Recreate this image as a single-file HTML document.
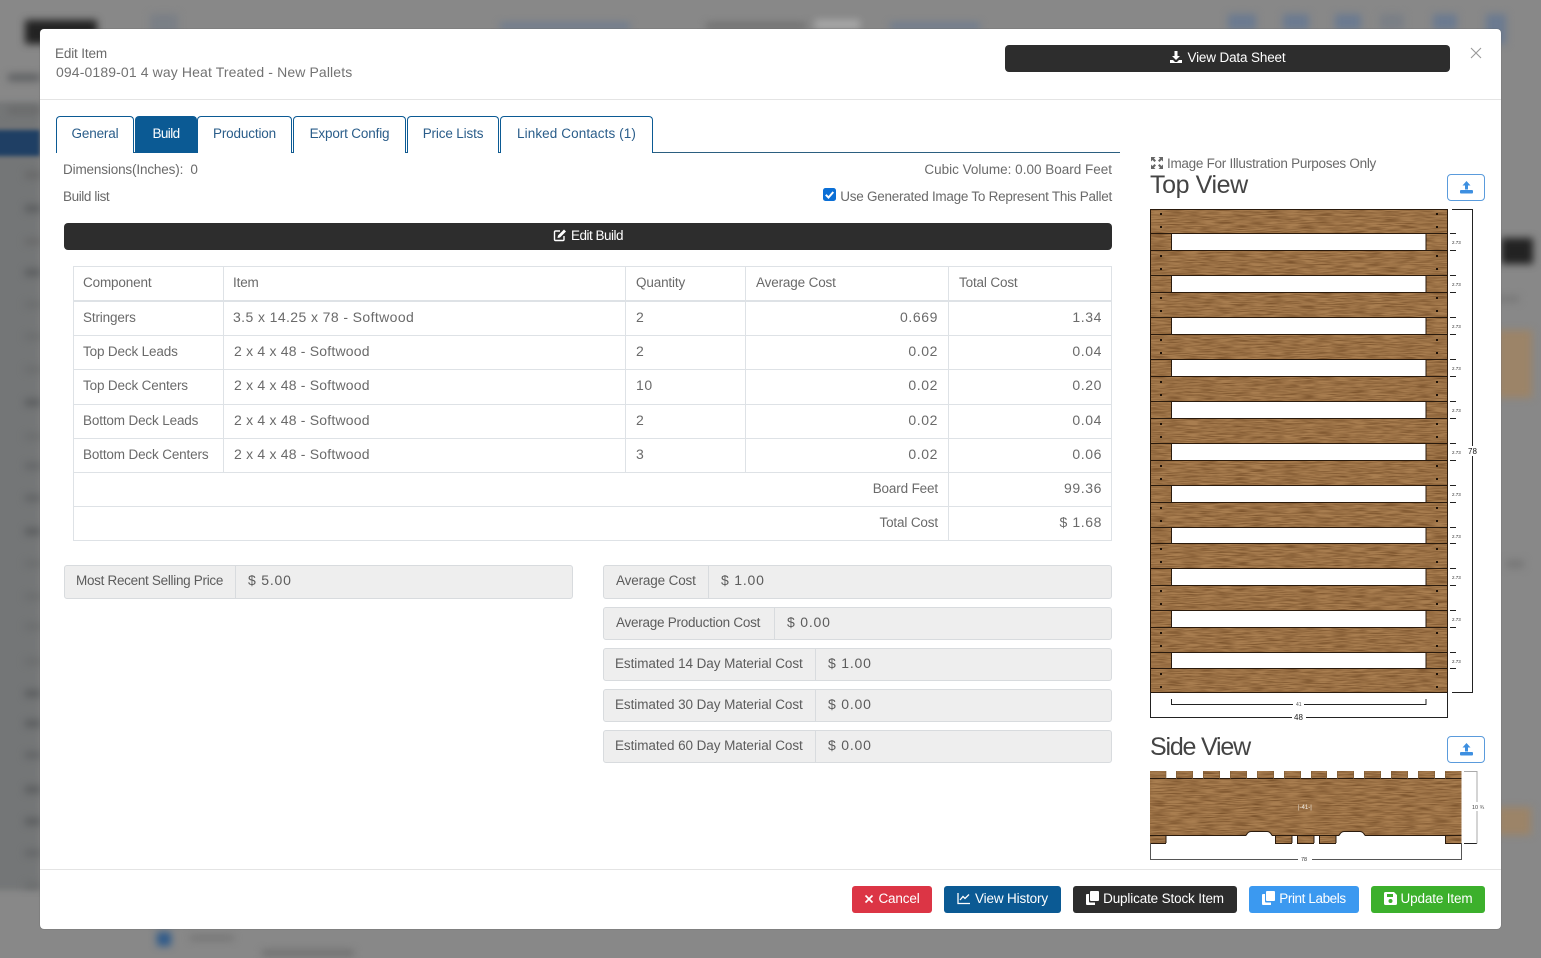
<!DOCTYPE html>
<html><head><meta charset="utf-8"><style>
html,body{margin:0;padding:0}
body{width:1541px;height:958px;position:relative;overflow:hidden;background:#888;font-family:"Liberation Sans",sans-serif;font-size:13.5px;letter-spacing:-.15px;color:#6a6a6a}
svg{letter-spacing:0}
.b{position:absolute;filter:blur(4px)}
#m{position:absolute;left:40px;top:29px;width:1461px;height:900px;background:#fff;border-radius:4px;box-shadow:0 0 1px #555}
.a{position:absolute;box-sizing:border-box}
.t{position:absolute;white-space:nowrap;line-height:22px;height:20px}
.r{text-align:right}
.t.n,.t.s{line-height:20px}
.n{font-size:14px;letter-spacing:.6px}
.s{font-size:14px;letter-spacing:.2px}
.tab{position:absolute;box-sizing:border-box;top:116px;height:37px;border:1px solid #0b5a94;border-bottom:0;border-radius:4px 4px 0 0;color:#2a5d8a;text-align:center;line-height:34px;background:#fff}
.btn{position:absolute;box-sizing:border-box;top:886px;height:27px;border-radius:3px;color:#fff;line-height:25px;text-align:center;white-space:nowrap}
.btn svg,.dk svg{vertical-align:-2px;margin-right:4px}
.dk{position:absolute;background:#2d2d2d;border-radius:4px;color:#fff;text-align:center;line-height:25px;height:27px}
.ig{position:absolute;box-sizing:border-box;background:#eee;border:1px solid #d8dbde;border-radius:3px;color:#5c5c5c}
.ig i{position:absolute;top:0;bottom:0;width:1px;background:#d8dbde}
.ig span{position:absolute;top:0;line-height:30px;white-space:nowrap;font-style:normal}
.ig span.n{letter-spacing:.8px;line-height:28px}
.h{position:absolute;background:#dee2e6;height:1px}
.v{position:absolute;background:#dee2e6;width:1px;top:266px}
.up{position:absolute;box-sizing:border-box;left:1447px;width:38px;height:27px;border:1px solid #5a9bdc;border-radius:4px;background:#fff}
.vw{position:absolute;font-size:25px;line-height:30px;color:#444;white-space:nowrap}
</style></head><body>
<div class="a" style="left:-10px;top:102px;width:50px;height:788px;background:#747677;filter:blur(3px)"></div>
<div class="b" style="left:25px;top:20px;width:72px;height:24px;background:#222"></div>
<div class="b" style="left:150px;top:14px;width:28px;height:20px;background:#7a7f86"></div>
<div class="b" style="left:500px;top:23px;width:130px;height:6px;background:#6b7a90"></div>
<div class="b" style="left:706px;top:23px;width:100px;height:6px;background:#6d6d6d"></div>
<div class="b" style="left:815px;top:20px;width:45px;height:9px;background:#aaa"></div>
<div class="b" style="left:890px;top:23px;width:90px;height:6px;background:#6b7a90"></div>
<div class="b" style="left:1228px;top:14px;width:28px;height:16px;background:#6b7a90"></div>
<div class="b" style="left:1283px;top:14px;width:26px;height:16px;background:#6b7a90"></div>
<div class="b" style="left:1335px;top:14px;width:26px;height:16px;background:#6b7a90"></div>
<div class="b" style="left:1380px;top:14px;width:24px;height:16px;background:#7a7f86"></div>
<div class="b" style="left:1433px;top:14px;width:24px;height:16px;background:#6b7a90"></div>
<div class="b" style="left:1486px;top:14px;width:20px;height:30px;background:#6b7a90"></div>
<div class="a" style="left:-6px;top:130px;width:46px;height:26px;background:#1f3f64;filter:blur(2px)"></div>
<div class="b" style="left:8px;top:74px;width:32px;height:7px;background:#5c5e60"></div>
<div class="b" style="left:8px;top:108px;width:32px;height:5px;background:#666"></div>
<div class="b" style="left:25px;top:172px;width:15px;height:6px;background:#666"></div>
<div class="b" style="left:25px;top:205px;width:15px;height:7px;background:#5a5c5e"></div>
<div class="b" style="left:25px;top:239px;width:15px;height:5px;background:#666"></div>
<div class="b" style="left:25px;top:269px;width:15px;height:7px;background:#5a5c5e"></div>
<div class="b" style="left:25px;top:302px;width:15px;height:5px;background:#696b6c"></div>
<div class="b" style="left:25px;top:334px;width:15px;height:5px;background:#696b6c"></div>
<div class="b" style="left:25px;top:367px;width:15px;height:5px;background:#696b6c"></div>
<div class="b" style="left:25px;top:399px;width:15px;height:7px;background:#5a5c5e"></div>
<div class="b" style="left:25px;top:434px;width:15px;height:5px;background:#696b6c"></div>
<div class="b" style="left:25px;top:463px;width:15px;height:6px;background:#626466"></div>
<div class="b" style="left:25px;top:495px;width:15px;height:6px;background:#5f6163"></div>
<div class="b" style="left:25px;top:528px;width:15px;height:7px;background:#5a5c5e"></div>
<div class="b" style="left:25px;top:561px;width:15px;height:5px;background:#696b6c"></div>
<div class="b" style="left:25px;top:594px;width:15px;height:5px;background:#696b6c"></div>
<div class="b" style="left:25px;top:624px;width:15px;height:5px;background:#696b6c"></div>
<div class="b" style="left:25px;top:659px;width:15px;height:5px;background:#696b6c"></div>
<div class="b" style="left:25px;top:690px;width:15px;height:7px;background:#5a5c5e"></div>
<div class="b" style="left:25px;top:720px;width:15px;height:7px;background:#5a5c5e"></div>
<div class="b" style="left:25px;top:752px;width:15px;height:6px;background:#5f6163"></div>
<div class="b" style="left:25px;top:786px;width:15px;height:7px;background:#5a5c5e"></div>
<div class="b" style="left:25px;top:818px;width:15px;height:7px;background:#5a5c5e"></div>
<div class="b" style="left:25px;top:850px;width:15px;height:6px;background:#626466"></div>
<div class="b" style="left:25px;top:883px;width:15px;height:5px;background:#696b6c"></div>
<div class="b" style="left:1501px;top:238px;width:32px;height:26px;background:#222"></div>
<div class="b" style="left:1497px;top:296px;width:22px;height:6px;background:#777"></div>
<div class="b" style="left:1497px;top:330px;width:35px;height:68px;background:#9c8468"></div>
<div class="b" style="left:1506px;top:560px;width:18px;height:8px;background:#777"></div>
<div class="b" style="left:1497px;top:807px;width:34px;height:28px;background:#9c8468"></div>
<div class="b" style="left:157px;top:932px;width:14px;height:14px;background:#2e5a8a"></div>
<div class="b" style="left:190px;top:936px;width:44px;height:4px;background:#6e6e6e"></div>
<div class="b" style="left:262px;top:950px;width:92px;height:6px;background:#6e6e6e"></div>
<div id="m"></div>

<div class="t" style="left:55px;top:43px">Edit Item</div>
<div class="t s" style="left:56px;top:62px;letter-spacing:.12px;color:#727272">094-0189-01 4 way Heat Treated - New Pallets</div>
<div class="dk" style="left:1005px;top:45px;width:445px"><svg width="14" height="14" viewBox="0 0 14 14"><path d="M5.500 1h3v5h2.500L7 10 3 6h2.500zM1 10h3l2 2h2l2-2h3v3H1z" fill="#fff"/></svg>View Data Sheet</div>
<svg class="a" style="left:1470px;top:47px" width="12" height="12" viewBox="0 0 12 12"><path d="M1 1l10 10M11 1L1 11" stroke="#999" stroke-width="1.100"/></svg>
<div class="a" style="left:40px;top:99px;width:1461px;height:1px;background:#e4e4e4"></div>

<div class="a" style="left:56px;top:152px;width:1064px;height:1px;background:#2b5f80"></div>
<div class="tab" style="left:56px;width:78px">General</div>
<div class="tab" style="left:135px;width:62px;background:#0b5a94;color:#fff;letter-spacing:-.6px">Build</div>
<div class="tab" style="left:197px;width:95px">Production</div>
<div class="tab" style="left:293px;width:113px">Export Config</div>
<div class="tab" style="left:407px;width:92px">Price Lists</div>
<div class="tab" style="left:500px;width:153px;letter-spacing:.1px">Linked Contacts (1)</div>

<div class="t" style="left:63px;top:159px">Dimensions(Inches): &nbsp;0</div>
<div class="t" style="left:63px;top:186px;letter-spacing:-.4px">Build list</div>
<div class="t r" style="right:429px;top:159px;letter-spacing:0">Cubic Volume: 0.00 Board Feet</div>
<div class="t r" style="right:429px;top:186px;letter-spacing:-.26px">Use Generated Image To Represent This Pallet</div>
<svg class="a" style="left:823px;top:188px" width="13" height="13" viewBox="0 0 13 13"><rect width="13" height="13" rx="2.500" fill="#0b6fd6"/><path d="M2.800 6.800l2.700 2.700 4.800-5.500" fill="none" stroke="#fff" stroke-width="2"/></svg>
<div class="dk" style="left:64px;top:223px;width:1048px;letter-spacing:-.5px"><svg width="14" height="14" viewBox="0 0 14 14"><path d="M11 8v3.500a1 1 0 0 1-1 1H2.500a1 1 0 0 1-1-1V4a1 1 0 0 1 1-1H7" fill="none" stroke="#fff" stroke-width="1.400"/><path d="M5 7.500L11 1.500l2 2-6 6-2.500.5z" fill="#fff"/></svg>Edit Build</div>

<div class="h" style="left:73px;top:266px;width:1039px"></div>
<div class="h" style="left:73px;top:300px;width:1039px;height:2px"></div>
<div class="h" style="left:73px;top:335px;width:1039px"></div>
<div class="h" style="left:73px;top:369px;width:1039px"></div>
<div class="h" style="left:73px;top:404px;width:1039px"></div>
<div class="h" style="left:73px;top:438px;width:1039px"></div>
<div class="h" style="left:73px;top:472px;width:1039px"></div>
<div class="h" style="left:73px;top:506px;width:1039px"></div>
<div class="h" style="left:73px;top:540px;width:1039px"></div>
<div class="v" style="left:73px;height:275px"></div>
<div class="v" style="left:223px;height:206px"></div>
<div class="v" style="left:625px;height:206px"></div>
<div class="v" style="left:745px;height:206px"></div>
<div class="v" style="left:948px;height:275px"></div>
<div class="v" style="left:1111px;height:275px"></div>

<div class="t" style="left:83px;top:272px">Component</div><div class="t" style="left:233px;top:272px">Item</div><div class="t" style="left:636px;top:272px">Quantity</div><div class="t" style="left:756px;top:272px">Average Cost</div><div class="t" style="left:959px;top:272px">Total Cost</div>

<div class="t" style="left:83px;top:307px">Stringers</div><div class="t s" style="left:233px;top:307px;letter-spacing:.4px">3.5 x 14.25 x 78 - Softwood</div><div class="t n" style="left:636px;top:307px">2</div><div class="t r n" style="right:603px;top:307px">0.669</div><div class="t r n" style="right:439px;top:307px">1.34</div>
<div class="t" style="left:83px;top:341px">Top Deck Leads</div><div class="t s" style="left:234px;top:341px">2 x 4 x 48 - Softwood</div><div class="t n" style="left:636px;top:341px">2</div><div class="t r n" style="right:603px;top:341px">0.02</div><div class="t r n" style="right:439px;top:341px">0.04</div>
<div class="t" style="left:83px;top:375px">Top Deck Centers</div><div class="t s" style="left:234px;top:375px">2 x 4 x 48 - Softwood</div><div class="t n" style="left:636px;top:375px">10</div><div class="t r n" style="right:603px;top:375px">0.02</div><div class="t r n" style="right:439px;top:375px">0.20</div>
<div class="t" style="left:83px;top:410px">Bottom Deck Leads</div><div class="t s" style="left:234px;top:410px">2 x 4 x 48 - Softwood</div><div class="t n" style="left:636px;top:410px">2</div><div class="t r n" style="right:603px;top:410px">0.02</div><div class="t r n" style="right:439px;top:410px">0.04</div>
<div class="t" style="left:83px;top:444px">Bottom Deck Centers</div><div class="t s" style="left:234px;top:444px">2 x 4 x 48 - Softwood</div><div class="t n" style="left:636px;top:444px">3</div><div class="t r n" style="right:603px;top:444px">0.02</div><div class="t r n" style="right:439px;top:444px">0.06</div>
<div class="t r" style="right:603px;top:478px">Board Feet</div><div class="t r n" style="right:439px;top:478px">99.36</div>
<div class="t r" style="right:603px;top:512px">Total Cost</div><div class="t r n" style="right:439px;top:512px">$ 1.68</div>

<div class="ig" style="left:64px;top:565px;width:509px;height:34px"><span style="left:11px;letter-spacing:-.3px">Most Recent Selling Price</span><i style="left:170px"></i><span class="n" style="left:183px">$ 5.00</span></div>
<div class="ig" style="left:603px;top:565px;width:509px;height:34px"><span style="left:12px">Average Cost</span><i style="left:104px"></i><span class="n" style="left:117px">$ 1.00</span></div>
<div class="ig" style="left:603px;top:607px;width:509px;height:33px"><span style="left:12px;letter-spacing:-.25px">Average Production Cost</span><i style="left:170px"></i><span class="n" style="left:183px">$ 0.00</span></div>
<div class="ig" style="left:603px;top:648px;width:509px;height:33px"><span style="left:11px;letter-spacing:-.07px">Estimated 14 Day Material Cost</span><i style="left:211px"></i><span class="n" style="left:224px">$ 1.00</span></div>
<div class="ig" style="left:603px;top:689px;width:509px;height:33px"><span style="left:11px;letter-spacing:-.07px">Estimated 30 Day Material Cost</span><i style="left:211px"></i><span class="n" style="left:224px">$ 0.00</span></div>
<div class="ig" style="left:603px;top:730px;width:509px;height:33px"><span style="left:11px;letter-spacing:-.07px">Estimated 60 Day Material Cost</span><i style="left:211px"></i><span class="n" style="left:224px">$ 0.00</span></div>

<svg class="a" style="left:1151px;top:157px" width="12" height="12" viewBox="0 0 12 12"><path d="M0 0h4.500L3 1.500 5 3.500 3.500 5l-2-2L0 4.500zM12 0v4.500L10.500 3l-2 2L7 3.500l2-2L7.500 0zM0 12V7.500L1.500 9l2-2L5 8.500l-2 2L4.500 12zM12 12H7.500L9 10.500l-2-2L8.500 7l2 2L12 7.500z" fill="#666"/></svg>
<div class="t" style="left:1167px;top:153px;letter-spacing:-.28px">Image For Illustration Purposes Only</div>
<div class="vw" style="left:1150px;top:170px;letter-spacing:-.4px">Top View</div>
<div class="up" style="top:174px"><svg style="position:absolute;left:12px;top:6px" width="13" height="13" viewBox="0 0 13 13"><path d="M6.500 0l4 4.500H8v4H5v-4H2.500z" fill="#3d8fe0"/><rect x="0" y="9" width="13" height="3.500" rx="1" fill="#3d8fe0"/></svg></div>
<div class="vw" style="left:1150px;top:732px;letter-spacing:-1.200px">Side View</div>
<div class="up" style="top:736px"><svg style="position:absolute;left:12px;top:6px" width="13" height="13" viewBox="0 0 13 13"><path d="M6.500 0l4 4.500H8v4H5v-4H2.500z" fill="#3d8fe0"/><rect x="0" y="9" width="13" height="3.500" rx="1" fill="#3d8fe0"/></svg></div>

<svg class="a" style="left:0;top:0;pointer-events:none" width="1541" height="958" viewBox="0 0 1541 958">
<defs>
<filter id="w" x="0" y="0" width="100%" height="100%" color-interpolation-filters="sRGB"><feTurbulence type="fractalNoise" baseFrequency=".06 .9" numOctaves="2" seed="4"/><feColorMatrix values="0 0 0 0 .42  0 0 0 0 .27  0 0 0 0 .13  1.600 0 0 0 -.55"/><feComposite in2="SourceGraphic" operator="in" result="n"/><feMerge><feMergeNode in="SourceGraphic"/><feMergeNode in="n"/></feMerge></filter>
</defs>
<g filter="url(#w)" fill="#a97e50">
<rect x="1150" y="209" width="22" height="484"/><rect x="1426" y="209" width="22" height="484"/>
<rect x="1150" y="209" width="298" height="24"/><rect x="1150" y="251" width="298" height="24"/><rect x="1150" y="293" width="298" height="24"/><rect x="1150" y="335" width="298" height="24"/><rect x="1150" y="377" width="298" height="24"/><rect x="1150" y="419" width="298" height="24"/><rect x="1150" y="461" width="298" height="24"/><rect x="1150" y="503" width="298" height="24"/><rect x="1150" y="544" width="298" height="24"/><rect x="1150" y="586" width="298" height="24"/><rect x="1150" y="628" width="298" height="24"/><rect x="1150" y="669" width="298" height="24"/>
<rect x="1150" y="779" width="311.500" height="56"/>
<rect x="1150" y="771" width="16" height="8"/><rect x="1176" y="771" width="17" height="8"/><rect x="1203" y="771" width="17" height="8"/><rect x="1230" y="771" width="17" height="8"/><rect x="1257" y="771" width="17" height="8"/><rect x="1284" y="771" width="17" height="8"/><rect x="1311" y="771" width="16" height="8"/><rect x="1337" y="771" width="17" height="8"/><rect x="1364" y="771" width="17" height="8"/><rect x="1391" y="771" width="17" height="8"/><rect x="1418" y="771" width="17" height="8"/><rect x="1445" y="771" width="16.500" height="8"/>
<rect x="1150" y="835" width="16" height="8"/><rect x="1275" y="835" width="17" height="8"/><rect x="1297" y="835" width="17" height="8"/><rect x="1319" y="835" width="17" height="8"/><rect x="1445" y="835" width="16.500" height="8"/>
</g>
<g fill="#fff"><rect x="1172" y="233.500" width="254" height="17"/><rect x="1172" y="275.500" width="254" height="17"/><rect x="1172" y="317.500" width="254" height="17"/><rect x="1172" y="359.500" width="254" height="17"/><rect x="1172" y="401.500" width="254" height="17"/><rect x="1172" y="443.500" width="254" height="17"/><rect x="1172" y="485.500" width="254" height="17"/><rect x="1172" y="527.500" width="254" height="16.500"/><rect x="1172" y="568.500" width="254" height="17"/><rect x="1172" y="610.500" width="254" height="17"/><rect x="1172" y="652.500" width="254" height="16.500"/>
<path d="M1246 835.500q2-4 5-4h16q3 0 5 4zM1339 835.500q2-4 5-4h16q3 0 5 4z"/></g>
<g fill="none" stroke="#2a1a0c" stroke-width="1">
<path d="M1150.500 209.500h297v483h-297z"/>
<path d="M1150 233.500h298M1150 250.500h298M1150 275.500h298M1150 292.500h298M1150 317.500h298M1150 334.500h298M1150 359.500h298M1150 376.500h298M1150 401.500h298M1150 418.500h298M1150 443.500h298M1150 460.500h298M1150 485.500h298M1150 502.500h298M1150 527.500h298M1150 543.500h298M1150 568.500h298M1150 585.500h298M1150 610.500h298M1150 627.500h298M1150 652.500h298M1150 668.500h298"/>
<path d="M1171.500 233v18M1426 233v18M1171.500 275v18M1426 275v18M1171.500 317v18M1426 317v18M1171.500 359v18M1426 359v18M1171.500 401v18M1426 401v18M1171.500 443v18M1426 443v18M1171.500 485v18M1426 485v18M1171.500 527v17M1426 527v17M1171.500 568v18M1426 568v18M1171.500 610v18M1426 610v18M1171.500 652v17M1426 652v17"/>
<path d="M1150.500 692v25.500h297V692M1171.500 699v5.500h254.500V699" stroke="#222"/>
<path d="M1452 209.500h20.500v483H1452" stroke="#222"/>
<path d="M1450 233.500h6M1450 250.500h6M1450 275.500h6M1450 292.500h6M1450 317.500h6M1450 334.500h6M1450 359.500h6M1450 376.500h6M1450 401.500h6M1450 418.500h6M1450 443.500h6M1450 460.500h6M1450 485.500h6M1450 502.500h6M1450 527.500h6M1450 543.500h6M1450 568.500h6M1450 585.500h6M1450 610.500h6M1450 627.500h6M1450 652.500h6M1450 668.500h6" stroke="#222"/>
<path d="M1150 835.500h96M1272 835.500h67M1365 835.500h96.500M1150 778.500h311.500M1246 835.500q2-4 5-4h16q3 0 5 4M1339 835.500q2-4 5-4h16q3 0 5 4"/>
<path d="M1150 843.500h16M1275 843.500h17M1297 843.500h17M1319 843.500h17M1445 843.500h16.500M1275.500 835v8M1292 835v8M1297.500 835v8M1314 835v8M1319.500 835v8M1336 835v8M1166 835v8M1445.500 835v8"/>
<path d="M1166 771v8M1176.500 771v8M1192.500 771v8M1203.500 771v8M1219.500 771v8M1230.500 771v8M1246.500 771v8M1257.500 771v8M1273.500 771v8M1284.500 771v8M1300.500 771v8M1311.500 771v8M1326.500 771v8M1337.500 771v8M1353.500 771v8M1364.500 771v8M1380.500 771v8M1391.500 771v8M1407.500 771v8M1418.500 771v8M1434.500 771v8M1445.500 771v8" stroke="#7b5a34" stroke-width=".6"/>
<path d="M1150.500 843v16.500h311V843" stroke="#555"/>
<path d="M1464 843.500h13" stroke="#222"/>
<path d="M1464 771.500h13v72" stroke="#aaa"/>
</g>
<g fill="#1e1208">
<rect x="1160" y="213" width="2" height="2"/><rect x="1436" y="213" width="2" height="2"/><rect x="1160" y="226" width="2" height="2"/><rect x="1436" y="226" width="2" height="2"/>
<rect x="1160" y="255" width="2" height="2"/><rect x="1436" y="255" width="2" height="2"/><rect x="1160" y="268" width="2" height="2"/><rect x="1436" y="268" width="2" height="2"/>
<rect x="1160" y="297" width="2" height="2"/><rect x="1436" y="297" width="2" height="2"/><rect x="1160" y="310" width="2" height="2"/><rect x="1436" y="310" width="2" height="2"/>
<rect x="1160" y="339" width="2" height="2"/><rect x="1436" y="339" width="2" height="2"/><rect x="1160" y="352" width="2" height="2"/><rect x="1436" y="352" width="2" height="2"/>
<rect x="1160" y="381" width="2" height="2"/><rect x="1436" y="381" width="2" height="2"/><rect x="1160" y="394" width="2" height="2"/><rect x="1436" y="394" width="2" height="2"/>
<rect x="1160" y="423" width="2" height="2"/><rect x="1436" y="423" width="2" height="2"/><rect x="1160" y="436" width="2" height="2"/><rect x="1436" y="436" width="2" height="2"/>
<rect x="1160" y="465" width="2" height="2"/><rect x="1436" y="465" width="2" height="2"/><rect x="1160" y="478" width="2" height="2"/><rect x="1436" y="478" width="2" height="2"/>
<rect x="1160" y="507" width="2" height="2"/><rect x="1436" y="507" width="2" height="2"/><rect x="1160" y="520" width="2" height="2"/><rect x="1436" y="520" width="2" height="2"/>
<rect x="1160" y="548" width="2" height="2"/><rect x="1436" y="548" width="2" height="2"/><rect x="1160" y="561" width="2" height="2"/><rect x="1436" y="561" width="2" height="2"/>
<rect x="1160" y="590" width="2" height="2"/><rect x="1436" y="590" width="2" height="2"/><rect x="1160" y="603" width="2" height="2"/><rect x="1436" y="603" width="2" height="2"/>
<rect x="1160" y="632" width="2" height="2"/><rect x="1436" y="632" width="2" height="2"/><rect x="1160" y="645" width="2" height="2"/><rect x="1436" y="645" width="2" height="2"/>
<rect x="1160" y="673" width="2" height="2"/><rect x="1436" y="673" width="2" height="2"/><rect x="1160" y="686" width="2" height="2"/><rect x="1436" y="686" width="2" height="2"/>
</g>
<g font-family="Liberation Sans,sans-serif" font-size="4.500" fill="#333">
<text x="1452" y="244">2.73</text><text x="1452" y="286">2.73</text><text x="1452" y="328">2.73</text><text x="1452" y="370">2.73</text><text x="1452" y="412">2.73</text><text x="1452" y="454">2.73</text><text x="1452" y="496">2.73</text><text x="1452" y="538">2.73</text><text x="1452" y="579">2.73</text><text x="1452" y="621">2.73</text><text x="1452" y="663">2.73</text>
</g>
<rect x="1467" y="446" width="12" height="10" fill="#fff"/>
<text x="1468" y="454" font-family="Liberation Sans,sans-serif" font-size="8" fill="#111">78</text>
<rect x="1292" y="712" width="14" height="10" fill="#fff"/>
<text x="1294" y="720" font-family="Liberation Sans,sans-serif" font-size="8" fill="#222">48</text>
<rect x="1293" y="701" width="11" height="7" fill="#fff"/>
<text x="1296" y="706" font-family="Liberation Sans,sans-serif" font-size="5" fill="#555">41</text>
<rect x="1298" y="855" width="14" height="8" fill="#fff"/>
<text x="1301" y="861" font-family="Liberation Sans,sans-serif" font-size="5.500" fill="#333">78</text>
<rect x="1471" y="802" width="12" height="9" fill="#fff"/>
<text x="1472" y="809" font-family="Liberation Sans,sans-serif" font-size="5.500" fill="#444">10 ¾</text>
<text x="1298" y="809" font-family="Liberation Sans,sans-serif" font-size="6" fill="#f3eee6">|-41-|</text>
</svg>

<div class="a" style="left:40px;top:869px;width:1461px;height:1px;background:#e4e4e4"></div>
<div class="btn" style="left:852px;width:80px;background:#dc3545"><svg width="10" height="10" viewBox="0 0 10 10" style="vertical-align:-1px"><path d="M1.500 1.500l7 7M8.500 1.500l-7 7" stroke="#fff" stroke-width="1.600"/></svg>Cancel</div>
<div class="btn" style="left:944px;width:117px;background:#0b5a94"><svg width="14" height="13" viewBox="0 0 14 13"><path d="M1 1v10.500h12" fill="none" stroke="#fff" stroke-width="1.300"/><path d="M3 8l3-3.500 2 2L12 2.500" fill="none" stroke="#fff" stroke-width="1.300"/></svg>View History</div>
<div class="btn" style="left:1073px;width:164px;background:#2d2d2d"><svg width="13" height="14" viewBox="0 0 13 14"><path d="M5 0h7a1 1 0 0 1 1 1v8a1 1 0 0 1-1 1H5a1 1 0 0 1-1-1V1a1 1 0 0 1 1-1z" fill="#fff"/><path d="M3 3v7.500a1 1 0 0 0 1 1h5V14H1a1 1 0 0 1-1-1V4a1 1 0 0 1 1-1z" fill="#fff"/></svg>Duplicate Stock Item</div>
<div class="btn" style="left:1249px;width:110px;background:#3b99f0;letter-spacing:-.4px"><svg width="13" height="14" viewBox="0 0 13 14"><path d="M5 0h7a1 1 0 0 1 1 1v8a1 1 0 0 1-1 1H5a1 1 0 0 1-1-1V1a1 1 0 0 1 1-1z" fill="#fff"/><path d="M3 3v7.500a1 1 0 0 0 1 1h5V14H1a1 1 0 0 1-1-1V4a1 1 0 0 1 1-1z" fill="#fff"/></svg>Print Labels</div>
<div class="btn" style="left:1371px;width:114px;background:#3cb02c"><svg width="13" height="13" viewBox="0 0 13 13"><path d="M1.500 0H10l3 3v8.500a1.500 1.500 0 0 1-1.500 1.500h-10A1.500 1.500 0 0 1 0 11.500v-10A1.500 1.500 0 0 1 1.500 0zM3 2v3h6V2zM6.500 7a2 2 0 1 0 0 4 2 2 0 0 0 0-4z" fill="#fff" fill-rule="evenodd"/></svg>Update Item</div>
</body></html>
